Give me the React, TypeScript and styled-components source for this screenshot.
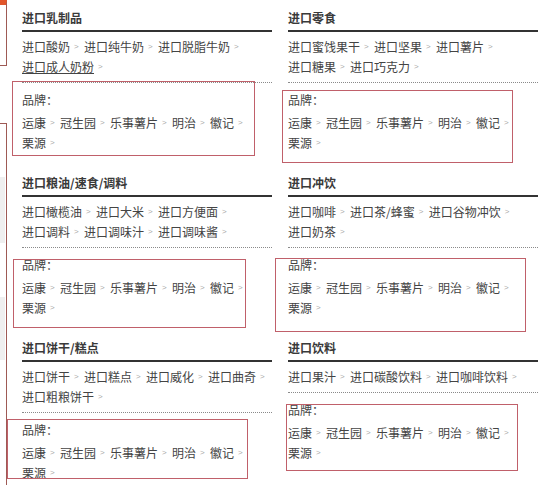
import React from 'react';
import styled, { createGlobalStyle } from 'styled-components';

const GlobalStyle = createGlobalStyle`
  html, body {
    margin: 0;
    padding: 0;
    background: #fff;
  }
  body {
    font-family: "Noto Sans CJK SC", "Microsoft YaHei", sans-serif;
    font-size: 12px;
    color: #444;
  }
`;

interface Mark {
  left: number;
  top: number;
  width: number;
  height: number;
}

interface Category {
  title: string;
  links: string[];
  active?: string;
  mark: Mark;
}

const brands = ['运康', '冠生园', '乐事薯片', '明治', '徽记', '栗源'];

const leftColumn: Category[] = [
  {
    title: '进口乳制品',
    links: ['进口酸奶', '进口纯牛奶', '进口脱脂牛奶', '进口成人奶粉'],
    active: '进口成人奶粉',
    mark: { left: -10, top: 81, width: 243, height: 75 },
  },
  {
    title: '进口粮油/速食/调料',
    links: ['进口橄榄油', '进口大米', '进口方便面', '进口调料', '进口调味汁', '进口调味酱'],
    mark: { left: -9, top: 94, width: 233, height: 69 },
  },
  {
    title: '进口饼干/糕点',
    links: ['进口饼干', '进口糕点', '进口威化', '进口曲奇', '进口粗粮饼干'],
    mark: { left: -15, top: 89, width: 241, height: 60 },
  },
];

const rightColumn: Category[] = [
  {
    title: '进口零食',
    links: ['进口蜜饯果干', '进口坚果', '进口薯片', '进口糖果', '进口巧克力'],
    mark: { left: -6, top: 90, width: 231, height: 73 },
  },
  {
    title: '进口冲饮',
    links: ['进口咖啡', '进口茶/蜂蜜', '进口谷物冲饮', '进口奶茶'],
    mark: { left: -13, top: 93, width: 251, height: 74 },
  },
  {
    title: '进口饮料',
    links: ['进口果汁', '进口碳酸饮料', '进口咖啡饮料'],
    mark: { left: -2, top: 74, width: 232, height: 67 },
  },
];

function LinkItems({ items, active }: { items: string[]; active?: string }) {
  return (
    <>
      {items.map(name => (
        <Item key={name}>
          <ItemLink $active={name === active}>{name}</ItemLink>
          <Arrow>&gt;</Arrow>
        </Item>
      ))}
    </>
  );
}

function CategoryBlock({ category }: { category: Category }) {
  const { mark } = category;
  return (
    <Section>
      <Title>{category.title}</Title>
      <LinkList>
        <LinkItems items={category.links} active={category.active} />
      </LinkList>
      <Brands>
        <BrandLabel>品牌：</BrandLabel>
        <BrandList>
          <LinkItems items={brands} />
        </BrandList>
      </Brands>
      <Highlight
        style={{ left: mark.left, top: mark.top, width: mark.width, height: mark.height }}
      />
    </Section>
  );
}

export default function App() {
  return (
    <Page>
      <GlobalStyle />
      <Side>
        <SideTab />
        <SidePanel>
          <SideShade $top={53} $height={66} />
          <SideShade $top={54} $height={63} />
        </SidePanel>
      </Side>
      <Main>
        <Column>
          {leftColumn.map(c => (
            <CategoryBlock key={c.title} category={c} />
          ))}
        </Column>
        <Column>
          {rightColumn.map(c => (
            <CategoryBlock key={c.title} category={c} />
          ))}
        </Column>
      </Main>
    </Page>
  );
}

const Page = styled.div`
  display: flex;
  height: 485px;
  overflow: hidden;
`;

const Side = styled.div`
  width: 7px;
  flex: none;
  display: flex;
  flex-direction: column;
`;

const SideTab = styled.div`
  height: 60px;
  border-top: 5px solid #e2552a;
  border-right: 1px solid #9e5a55;
  border-bottom: 1px solid #9e5a55;
`;

const SidePanel = styled.div`
  margin-top: 57px;
  flex: 1;
  border-top: 1px solid #9e5a55;
  border-right: 1px solid #9e5a55;
`;

const SideShade = styled.div<{ $top: number; $height: number }>`
  margin-top: ${p => p.$top}px;
  height: ${p => p.$height}px;
  width: 5px;
  background: #efefef;
`;

const Main = styled.div`
  display: flex;
  gap: 16px;
  padding-left: 15px;
`;

const Column = styled.div`
  width: 250px;
  display: flex;
  flex-direction: column;
`;

const Section = styled.div`
  position: relative;
  height: 165px;
  flex: none;
`;

const Title = styled.div`
  padding-top: 6px;
  line-height: 24px;
  font-weight: bold;
  color: #3a3a3a;
  border-bottom: 2px solid #333;
`;

const LinkList = styled.div`
  display: flex;
  flex-wrap: wrap;
  padding: 5px 0;
  border-bottom: 1px dotted #8a8a8a;
`;

const Item = styled.span`
  display: inline-flex;
  align-items: center;
  line-height: 20px;
  white-space: nowrap;
`;

const ItemLink = styled.a<{ $active?: boolean }>`
  color: #444;
  text-decoration: ${p => (p.$active ? 'underline' : 'none')};
  cursor: pointer;
`;

const Arrow = styled.span`
  display: inline-block;
  box-sizing: border-box;
  width: 14px;
  padding-left: 4px;
  font-family: "Liberation Sans", sans-serif;
  font-size: 8px;
  color: #aaa;
`;

const Brands = styled.div`
  padding-top: 7px;
`;

const BrandLabel = styled.div`
  line-height: 20px;
  margin-bottom: 3px;
  color: #444;
`;

const BrandList = styled.div`
  display: flex;
  flex-wrap: wrap;
`;

const Highlight = styled.div`
  position: absolute;
  box-sizing: border-box;
  border: 1px solid #c0606a;
  pointer-events: none;
`;
